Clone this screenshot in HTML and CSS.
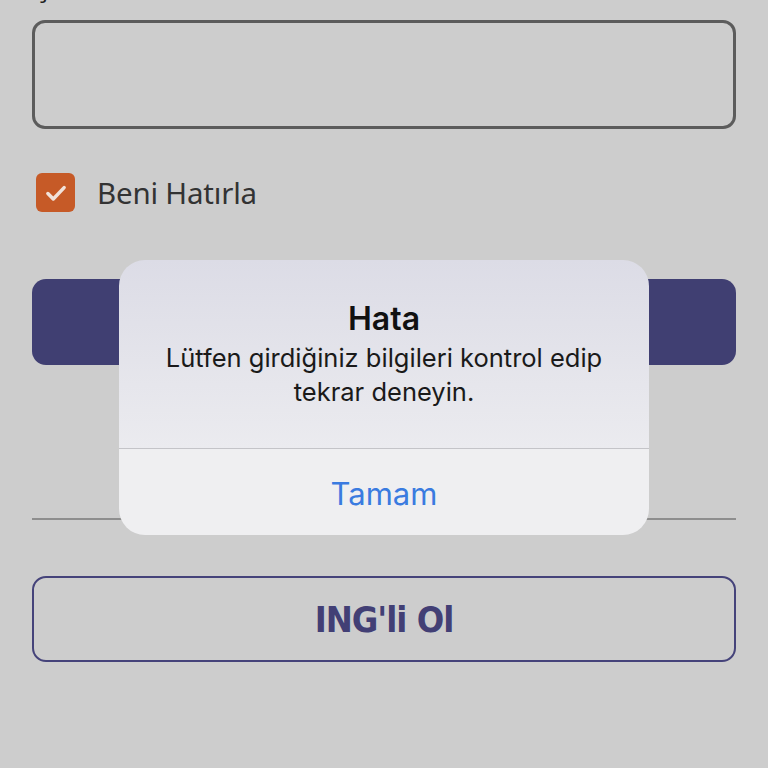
FILE: index.html
```html
<!DOCTYPE html>
<html lang="tr">
<head>
<meta charset="utf-8">
<link rel="stylesheet" href="styles.css">
</head>
<body>
<div class="page">
  <div class="field-label">Şifre</div>
  <div class="input"></div>
  <div class="remember">
    <span class="check">
      <svg width="26" height="26" viewBox="0 0 24 24"><path d="M4.5 12.5 L9.5 17.5 L19.5 7" fill="none" stroke="#f1e2da" stroke-width="3.2" stroke-linecap="round" stroke-linejoin="round"/></svg>
    </span>
    <span class="remember-text">Beni Hatırla</span>
  </div>
  <div class="primary"></div>
  <div class="sep"></div>
  <div class="outline">ING'li Ol</div>
</div>
<div class="alert">
  <div class="alert-body">
    <div class="alert-title">Hata</div>
    <div class="alert-msg">Lütfen girdiğiniz bilgileri kontrol edip<br>tekrar deneyin.</div>
  </div>
  <div class="alert-action">Tamam</div>
</div>
</body>
</html>
```
FILE: styles.css
```css
html, body {
  margin: 0;
  padding: 0;
}
body {
  width: 768px;
  height: 768px;
  overflow: hidden;
  background: #cdcdcd;
  font-family: "Noto Sans", "DejaVu Sans", sans-serif;
  position: relative;
}
.page {
  padding: 0 32px;
  display: flex;
  flex-direction: column;
}
.field-label {
  font-size: 28px;
  line-height: 30px;
  height: 30px;
  margin-top: -30px;
  color: #222;
  padding-left: 4px;
}
.input {
  margin-top: 20px;
  height: 103px;
  border: 3px solid #5c5c5c;
  border-radius: 13px;
}
.remember {
  margin-top: 44px;
  display: flex;
  align-items: center;
  height: 39px;
  padding-left: 4px;
}
.check {
  width: 39px;
  height: 39px;
  border-radius: 6px;
  background: #c65a27;
  display: flex;
  align-items: center;
  justify-content: center;
}
.remember-text {
  margin-left: 22px;
  font-size: 29.5px;
  color: #333;
  letter-spacing: -0.2px;
}
.primary {
  margin-top: 67px;
  height: 86px;
  border-radius: 14px;
  background: #403f72;
}
.sep {
  margin-top: 153px;
  height: 2px;
  background: #8e8e8e;
}
.outline {
  margin-top: 56px;
  height: 82px;
  border: 2px solid #45437a;
  border-radius: 14px;
  display: flex;
  align-items: center;
  justify-content: center;
  font-family: "DejaVu Sans Condensed", "DejaVu Sans", sans-serif;
  font-weight: bold;
  font-size: 36px;
  color: #423f75;
  letter-spacing: -1px;
}
.alert {
  position: absolute;
  left: 119px;
  top: 260px;
  width: 530px;
  height: 275px;
  border-radius: 26px;
  overflow: hidden;
  display: flex;
  flex-direction: column;
  font-family: Inter, "Noto Sans", sans-serif;
}
.alert-body {
  height: 189px;
  background: linear-gradient(#dcdce6, #ebebef);
  border-bottom: 1px solid #c4c4c8;
  display: flex;
  flex-direction: column;
  align-items: center;
  text-align: center;
  padding-top: 40px;
  box-sizing: border-box;
}
.alert-title {
  font-size: 32px;
  font-weight: 600;
  color: #111;
  line-height: 38px;
}
.alert-msg {
  margin-top: 3px;
  font-size: 25.5px;
  line-height: 34px;
  color: #1a1a1a;
}
.alert-action {
  flex: 1;
  background: #efeff1;
  display: flex;
  align-items: center;
  justify-content: center;
  font-size: 31px;
  color: #3a7be0;
  padding-top: 2px;
}
```
